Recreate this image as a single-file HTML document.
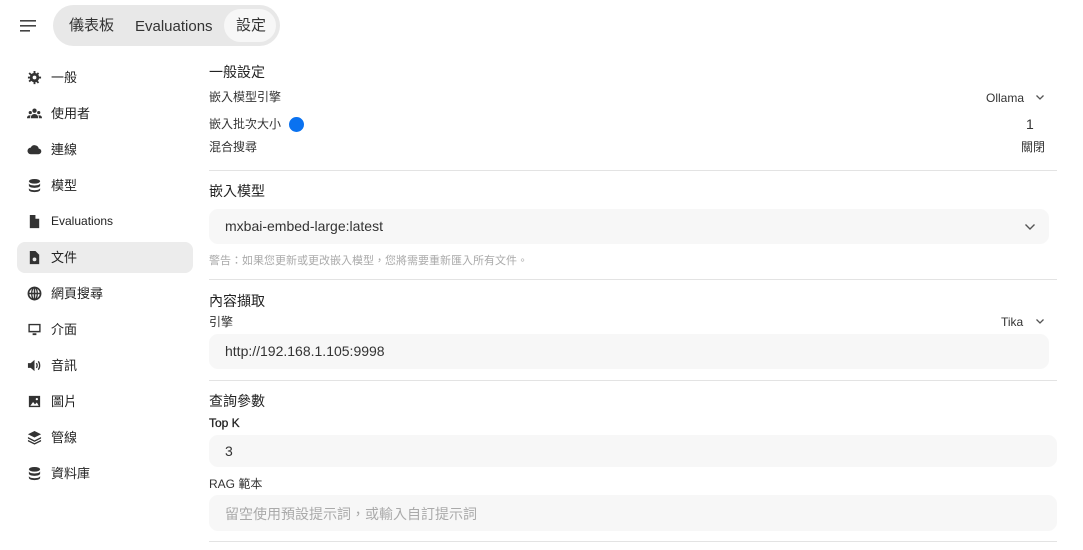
<!DOCTYPE html>
<html><head><meta charset="utf-8"><style>
*{margin:0;padding:0;box-sizing:border-box}
body{width:1083px;height:550px;overflow:hidden;background:#fff;font-family:"Liberation Sans","Noto Sans CJK TC",sans-serif;color:#1f1f1f;position:relative}
.a{position:absolute;white-space:nowrap}
.pill{left:53px;top:5px;width:227px;height:41px;background:#e8e8e8;border-radius:21px}
.tab{font-size:15px;color:#333}
.act{left:224px;top:9px;width:52px;height:33px;background:#f7f7f7;border-radius:17px}
.nav{left:17px;width:176px;height:31px;border-radius:8px;font-size:13px;color:#222}
.nav span{position:absolute;left:34px;top:5px}
.nav svg{position:absolute;left:10px;top:8px;width:15px;height:15px;fill:#333}
.sel{background:#ececec}
.h{font-size:14px;left:209px;color:#222}
.l{font-size:12px;left:209px;color:#333}
.r{font-size:12px;color:#333}
.hr{left:209px;width:848px;height:1px;background:#e3e3e3}
.inp{left:209px;background:#f7f7f7;border-radius:9px;font-size:14px;color:#333}
.inp span{position:absolute;left:16px;top:9px}
</style></head><body>
<svg class="a" style="left:20px;top:19px" width="17" height="14" viewBox="0 0 17 14"><rect x="0" y="1" width="16" height="1.6" fill="#444"/><rect x="0" y="6" width="16" height="1.6" fill="#444"/><rect x="0" y="11" width="10" height="1.6" fill="#444"/></svg>
<div class="a pill"></div>
<div class="a act"></div>
<div class="a tab" style="left:69px;top:14px">儀表板</div>
<div class="a tab" style="left:135px;top:18px">Evaluations</div>
<div class="a tab" style="left:236px;top:14px">設定</div>

<div class="a nav" style="top:62px"><svg viewBox="0 0 16 16"><circle cx="8" cy="8" r="3.5" fill="none" stroke="#333" stroke-width="3"/><path d="M7 1h2v3H7zM7 12h2v3H7zM1 7h3v2H1zM12 7h3v2h-3zM3 2.5l2 2-1.4 1.4-2-2zM11 11l2 2-1.4 1.4-2-2zM13 3.9l-2 2-1.4-1.4 2-2zM5 11l-2 2-1.4-1.4 2-2z"/></svg><span>一般</span></div>
<div class="a nav" style="top:98px"><svg viewBox="0 0 16 16"><circle cx="8" cy="5" r="2.3"/><circle cx="3.5" cy="7" r="1.7"/><circle cx="12.5" cy="7" r="1.7"/><path d="M4 13c0-3 1.8-4.5 4-4.5s4 1.5 4 4.5zM0 13c0-2 1-3 3-3 .6 0 .9.2.9.2-.6 1-.8 1.8-.8 2.8zM16 13c0-2-1-3-3-3-.6 0-.9.2-.9.2.6 1 .8 1.8.8 2.8z"/></svg><span>使用者</span></div>
<div class="a nav" style="top:134px"><svg viewBox="0 0 16 16"><path d="M4 13a3.5 3.5 0 010-7 4.5 4.5 0 018.5 1A3 3 0 0112 13z"/></svg><span>連線</span></div>
<div class="a nav" style="top:170px"><svg viewBox="0 0 16 16"><ellipse cx="8" cy="3.5" rx="6" ry="2.5"/><path d="M2 5.5c0 1.5 2.7 2.5 6 2.5s6-1 6-2.5V8c0 1.5-2.7 2.5-6 2.5S2 9.5 2 8zM2 10.5c0 1.5 2.7 2.5 6 2.5s6-1 6-2.5V12.5C14 14 11.3 15 8 15s-6-1-6-2.5z"/></svg><span>模型</span></div>
<div class="a nav" style="top:206px"><svg viewBox="0 0 16 16"><path d="M3 1h6l4 4v10H3zM9 1v4h4z"/></svg><span style="font-size:12px;top:8px">Evaluations</span></div>
<div class="a nav sel" style="top:242px"><svg viewBox="0 0 16 16"><path d="M3 1h6l4 4v10H3z"/><circle cx="8" cy="10" r="2" fill="#ececec"/></svg><span>文件</span></div>
<div class="a nav" style="top:278px"><svg viewBox="0 0 16 16"><circle cx="8" cy="8" r="6.5" fill="none" stroke="#333" stroke-width="1.8"/><path d="M7.2 1.5h1.6v13H7.2zM1.5 7.2h13v1.6h-13z"/><ellipse cx="8" cy="8" rx="3" ry="6.5" fill="none" stroke="#333" stroke-width="1.4"/></svg><span>網頁搜尋</span></div>
<div class="a nav" style="top:314px"><svg viewBox="0 0 16 16"><path d="M1.5 2h13v9h-13zM3 3.5v6h10v-6zM6 12h4v2H6z"/></svg><span>介面</span></div>
<div class="a nav" style="top:350px"><svg viewBox="0 0 16 16"><path d="M1 5.5h3l4-3.5v12l-4-3.5H1z"/><path d="M10 5.5c1 1.5 1 3.5 0 5M12 3.5c2 2.5 2 6.5 0 9" fill="none" stroke="#333" stroke-width="1.4"/></svg><span>音訊</span></div>
<div class="a nav" style="top:386px"><svg viewBox="0 0 16 16"><path d="M2 2h12v12H2z"/><path d="M3.5 12.5l3-4 2 2.5 2-2 2 3.5z" fill="#fff"/><circle cx="10.5" cy="5.5" r="1.2" fill="#fff"/></svg><span>圖片</span></div>
<div class="a nav" style="top:422px"><svg viewBox="0 0 16 16"><path d="M8 1l7 3.5-7 3.5-7-3.5z"/><path d="M1 7.5l7 3.5 7-3.5v1.6L8 12.6 1 9.1zM1 10.5l7 3.5 7-3.5v1.6L8 15.6 1 12.1z"/></svg><span>管線</span></div>
<div class="a nav" style="top:458px"><svg viewBox="0 0 16 16"><ellipse cx="8" cy="3.5" rx="6" ry="2.5"/><path d="M2 5.5c0 1.5 2.7 2.5 6 2.5s6-1 6-2.5V8c0 1.5-2.7 2.5-6 2.5S2 9.5 2 8zM2 10.5c0 1.5 2.7 2.5 6 2.5s6-1 6-2.5V12.5C14 14 11.3 15 8 15s-6-1-6-2.5z"/></svg><span>資料庫</span></div>

<div class="a h" style="top:62px">一般設定</div>
<div class="a l" style="top:88px">嵌入模型引擎</div>
<div class="a r" style="left:986px;top:91px">Ollama</div>
<svg class="a" style="left:1035px;top:94px" width="10" height="7" viewBox="0 0 10 7"><path d="M1.5 1.5l3.5 3.5 3.5-3.5" fill="none" stroke="#555" stroke-width="1.3"/></svg>
<div class="a l" style="top:115px">嵌入批次大小</div>
<div class="a" style="left:289px;top:117px;width:15px;height:15px;border-radius:50%;background:#0a72f0"></div>
<div class="a r" style="left:1026px;top:116px;font-size:14px">1</div>
<div class="a l" style="top:138px">混合搜尋</div>
<div class="a r" style="left:1021px;top:138px">關閉</div>
<div class="a hr" style="top:170px"></div>

<div class="a h" style="top:181px">嵌入模型</div>
<div class="a inp" style="top:209px;width:840px;height:35px"><span>mxbai-embed-large:latest</span></div>
<svg class="a" style="left:1024px;top:223px" width="12" height="8" viewBox="0 0 12 8"><path d="M1.5 1.5l4.5 4.5 4.5-4.5" fill="none" stroke="#555" stroke-width="1.4"/></svg>
<div class="a" style="left:209px;top:252px;font-size:11px;color:#aaa">警告：如果您更新或更改嵌入模型，您將需要重新匯入所有文件。</div>
<div class="a hr" style="top:279px"></div>

<div class="a h" style="top:291px">內容擷取</div>
<div class="a l" style="top:313px">引擎</div>
<div class="a r" style="left:1001px;top:315px">Tika</div>
<svg class="a" style="left:1035px;top:318px" width="10" height="7" viewBox="0 0 10 7"><path d="M1.5 1.5l3.5 3.5 3.5-3.5" fill="none" stroke="#555" stroke-width="1.3"/></svg>
<div class="a inp" style="top:334px;width:840px;height:35px"><span>http://192.168.1.105:9998</span></div>
<div class="a hr" style="top:380px"></div>

<div class="a h" style="top:391px">查詢參數</div>
<div class="a l" style="top:416px;color:#222;-webkit-text-stroke:0.3px #222">Top K</div>
<div class="a inp" style="top:435px;width:848px;height:32px"><span style="top:8px">3</span></div>
<div class="a l" style="top:475px">RAG 範本</div>
<div class="a inp" style="top:495px;width:848px;height:36px"><span style="color:#aaa">留空使用預設提示詞，或輸入自訂提示詞</span></div>
<div class="a hr" style="top:541px"></div>
</body></html>
